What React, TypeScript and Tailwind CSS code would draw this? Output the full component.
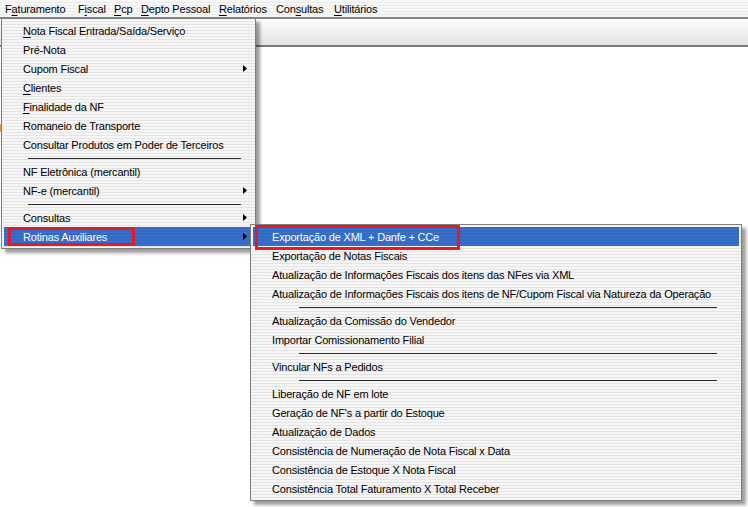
import type { ReactNode } from "react";

type Item = { label?: string; u?: number; arrow?: boolean; sep?: boolean; active?: boolean };

const topMenu: { label: string; u: number; w: string }[] = [
  { label: "Faturamento", u: 1, w: "w-[73px]" },
  { label: "Fiscal", u: 1, w: "w-[36px]" },
  { label: "Pcp", u: 0, w: "w-[27px]" },
  { label: "Depto Pessoal", u: 0, w: "w-[78px]" },
  { label: "Relatórios", u: 0, w: "w-[57px]" },
  { label: "Consultas", u: 3, w: "w-[58px]" },
  { label: "Utilitários", u: 0, w: "w-[60px]" }
];

const mainItems: Item[] = [
  { label: "Nota Fiscal Entrada/Saída/Serviço", u: 0 },
  { label: "Pré-Nota" },
  { label: "Cupom Fiscal", arrow: true },
  { label: "Clientes", u: 0 },
  { label: "Finalidade da NF", u: 0 },
  { label: "Romaneio de Transporte" },
  { label: "Consultar Produtos em Poder de Terceiros" },
  { sep: true },
  { label: "NF Eletrônica (mercantil)" },
  { label: "NF-e (mercantil)", arrow: true },
  { sep: true },
  { label: "Consultas", arrow: true },
  { label: "Rotinas Auxiliares", arrow: true, active: true }
];

const subItems: Item[] = [
  { label: "Exportação de XML + Danfe + CCe", active: true },
  { label: "Exportação de Notas Fiscais" },
  { label: "Atualização de Informações Fiscais dos itens das NFes via XML" },
  { label: "Atualização de Informações Fiscais dos itens de NF/Cupom Fiscal via Natureza da Operação" },
  { sep: true },
  { label: "Atualização da Comissão do Vendedor" },
  { label: "Importar Comissionamento Filial" },
  { sep: true },
  { label: "Vincular NFs a Pedidos" },
  { sep: true },
  { label: "Liberação de NF em lote" },
  { label: "Geração de NF's a partir do Estoque" },
  { label: "Atualização de Dados" },
  { label: "Consistência de Numeração de Nota Fiscal x Data" },
  { label: "Consistência de Estoque X Nota Fiscal" },
  { label: "Consistência Total Faturamento X Total Receber" }
];

function Accel({ text, u }: { text: string; u?: number }) {
  if (u === undefined) return <>{text}</>;
  return (
    <>
      {text.slice(0, u)}
      <span className="underline underline-offset-[2px]">{text.charAt(u)}</span>
      {text.slice(u + 1)}
    </>
  );
}

function Arrow() {
  return (
    <svg width="4" height="7" viewBox="0 0 4 7" className="absolute right-[6px] top-[6px]">
      <path d="M0 0 L4 3.5 L0 7 Z" fill="#000" />
    </svg>
  );
}

function MenuList({ items, sepClass }: { items: Item[]; sepClass: string }) {
  return (
    <>
      {items.map((it, i) =>
        it.sep ? (
          <div key={i} className="h-[8px] flex flex-col justify-center">
            <div className={`h-px bg-[#2a2a2a] ${sepClass}`} />
          </div>
        ) : (
          <div
            key={i}
            className={`relative h-[19px] flex items-center pl-[19px] pt-px whitespace-nowrap ${
              it.active
                ? "bg-[repeating-linear-gradient(#3169c4_0px,#3169c4_2px,#3a72cc_2px,#3a72cc_3px)] text-white"
                : "text-black"
            }`}
          >
            <Accel text={it.label ?? ""} u={it.u} />
            {it.arrow ? <Arrow /> : null}
          </div>
        )
      )}
    </>
  );
}

function Popup({ className, children }: { className: string; children: ReactNode }) {
  return (
    <div
      className={`absolute border border-[#7d7d7d] p-[2px] shadow-[4px_4px_3px_rgba(0,0,0,0.38)] bg-[repeating-linear-gradient(#f6f6f6_0px,#f6f6f6_2px,#e4e4e4_2px,#e4e4e4_3px)] ${className}`}
    >
      {children}
    </div>
  );
}

export default function App() {
  return (
    <div className="relative w-[748px] h-[507px] overflow-hidden bg-white font-['Liberation_Sans',Arial,sans-serif] text-[11px] tracking-[-0.18px] text-black">
      <div className="h-[17px] flex items-center pl-[5px] pt-px bg-[repeating-linear-gradient(#f7f7f7_0px,#f7f7f7_2px,#ececec_2px,#ececec_3px)]">
        {topMenu.map((m) => (
          <div key={m.label} className={`${m.w} whitespace-nowrap`}>
            <Accel text={m.label} u={m.u} />
          </div>
        ))}
      </div>
      <div className="h-[30px] border-t-2 border-b-2 border-t-[#858585] border-b-[#7a7a7a] bg-[linear-gradient(#fdfdfd,#e2e2e2)]" />

      <div className="absolute left-0 top-[124px] w-[2px] h-[8px] bg-[#e39a2a]" />

      <Popup className="left-[1px] top-[18px] w-[255px]">
        <MenuList items={mainItems} sepClass="ml-[24px] mr-[12px]" />
      </Popup>

      <Popup className="left-[250px] top-[224px] w-[492px]">
        <MenuList items={subItems} sepClass="ml-[46px] mr-[22px]" />
      </Popup>

      <div className="absolute left-[8px] top-[227px] w-[127px] h-[19px] border-[3px] border-[#e51b24]" />
      <div className="absolute left-[255px] top-[225px] w-[205px] h-[25px] border-[3px] border-[#e51b24]" />
    </div>
  );
}
